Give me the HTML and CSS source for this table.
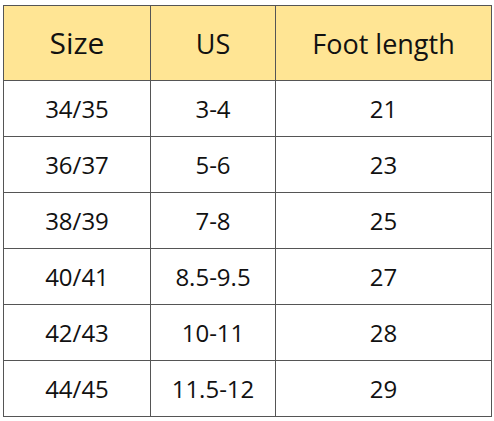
FILE: index.html
```html
<!DOCTYPE html>
<html>
<head>
<meta charset="utf-8">
<link rel="stylesheet" href="styles.css">
</head>
<body>
<table class="size-table">
  <colgroup>
    <col class="c1"><col class="c2"><col class="c3">
  </colgroup>
  <thead>
    <tr class="head">
      <th class="size">Size</th>
      <th>US</th>
      <th>Foot length</th>
    </tr>
  </thead>
  <tbody>
    <tr><td>34/35</td><td>3-4</td><td>21</td></tr>
    <tr><td>36/37</td><td>5-6</td><td>23</td></tr>
    <tr><td>38/39</td><td>7-8</td><td>25</td></tr>
    <tr><td>40/41</td><td>8.5-9.5</td><td>27</td></tr>
    <tr><td>42/43</td><td>10-11</td><td>28</td></tr>
    <tr><td>44/45</td><td>11.5-12</td><td>29</td></tr>
  </tbody>
</table>
</body>
</html>
```
FILE: styles.css
```css
html, body {
  margin: 0;
  padding: 0;
  background: #ffffff;
}
body {
  padding: 5px 0 0 3px;
  font-family: "Open Sans", "Noto Sans", sans-serif;
  color: #111111;
}
.size-table {
  border-collapse: collapse;
  table-layout: fixed;
  width: 488px;
}
.c1 { width: 147px; }
.c2 { width: 125px; }
.c3 { width: 216px; }
.size-table th,
.size-table td {
  border: 1px solid #555555;
  padding: 0;
  text-align: center;
  vertical-align: middle;
  line-height: 1;
}
.head th {
  background: #ffe594;
  height: 74px;
  font-weight: 400;
  font-size: 27px;
}
.head th.size {
  font-size: 30px;
}
.size-table td {
  height: 55px;
  font-size: 24px;
}
```
